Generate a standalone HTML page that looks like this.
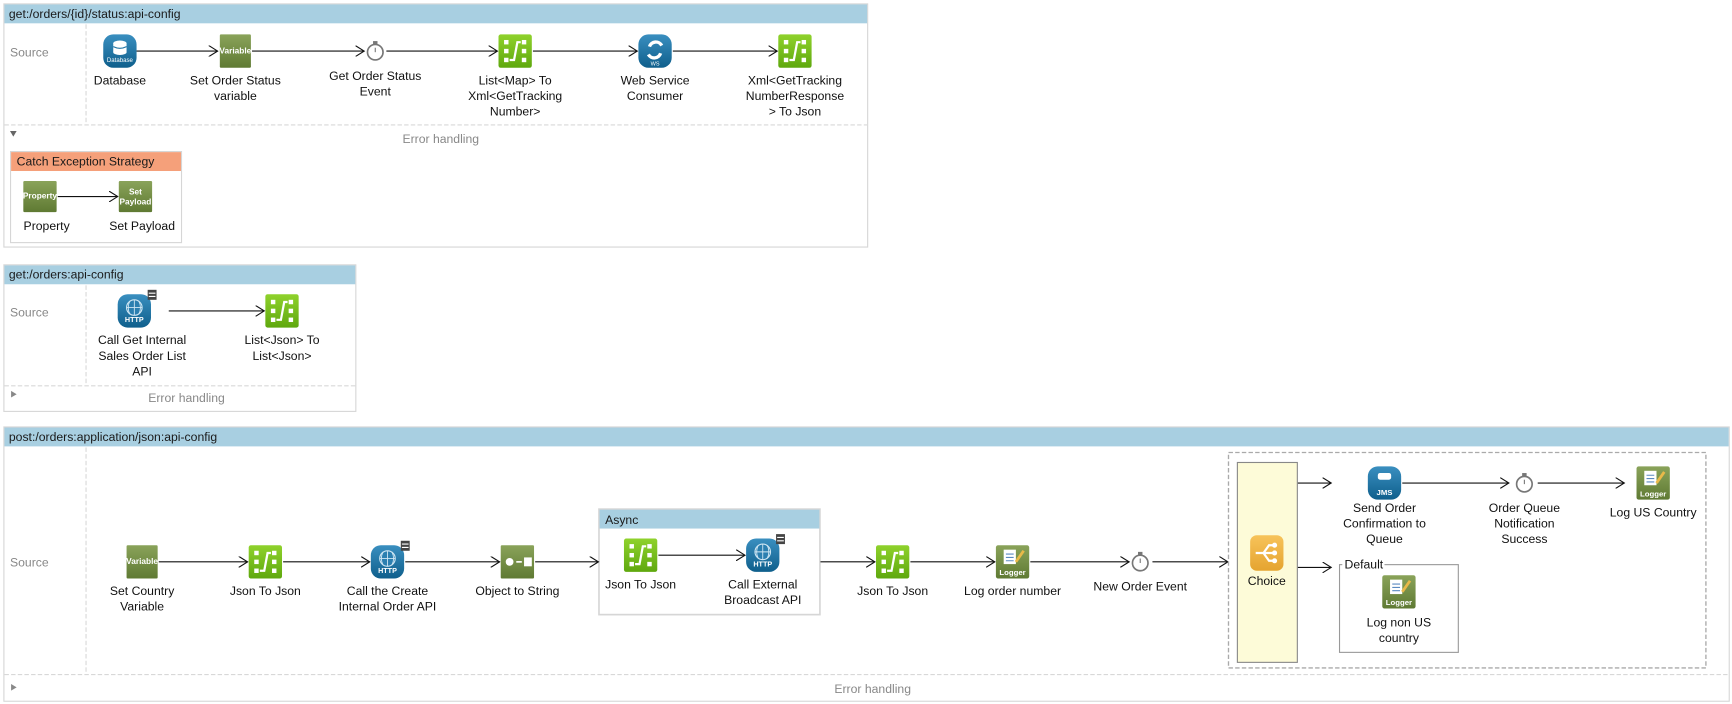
<!DOCTYPE html>
<html><head><meta charset="utf-8"><style>
html,body{margin:0;padding:0;background:#fff;overflow:hidden}
svg{display:block}
text{font-family:"Liberation Sans",sans-serif;font-size:11px;fill:#111}
.c{text-anchor:middle}
.g{fill:#888}
.h{fill:#1a1a1a}
</style></head><body>
<svg width="1732" height="704" viewBox="0 0 1560 634" preserveAspectRatio="none" xmlns="http://www.w3.org/2000/svg">
<defs>
<marker id="a" markerWidth="10" markerHeight="10" refX="8" refY="5" orient="auto" markerUnits="userSpaceOnUse">
<path d="M0,0 L8,5 L0,10" fill="none" stroke="#111" stroke-width="1"/></marker>
<linearGradient id="gr" x1="0" y1="0" x2="0" y2="1"><stop offset="0" stop-color="#8fd22c"/><stop offset="1" stop-color="#5fa80e"/></linearGradient>
<linearGradient id="ol" x1="0" y1="0" x2="0" y2="1"><stop offset="0" stop-color="#8aa35a"/><stop offset="1" stop-color="#5f7a33"/></linearGradient>
<linearGradient id="bl" x1="0" y1="0" x2="0" y2="1"><stop offset="0" stop-color="#3a8fc0"/><stop offset="1" stop-color="#0f5f8c"/></linearGradient>
<linearGradient id="or" x1="0" y1="0" x2="0" y2="1"><stop offset="0" stop-color="#f7c35a"/><stop offset="1" stop-color="#e5a430"/></linearGradient>
<g id="tr"><rect x="-15" y="-15" width="30" height="30" rx="2" fill="url(#gr)"/>
<rect x="-10" y="-10" width="4" height="4" fill="#fff"/><rect x="-10" y="-2" width="4" height="4" fill="#fff"/><rect x="-10" y="6" width="4" height="4" fill="#fff"/>
<rect x="6" y="-10" width="4" height="4" fill="#fff"/><rect x="6" y="-2" width="4" height="4" fill="#fff"/><rect x="6" y="6" width="4" height="4" fill="#fff"/>
<path d="M-5,8 L-1,8 L2,-8 L5,-8" fill="none" stroke="#fff" stroke-width="2"/></g>
<g id="tm"><circle cx="0" cy="1" r="7" fill="#fff" stroke="#777" stroke-width="1.5"/><rect x="-2" y="-9" width="4" height="3" fill="#777"/><path d="M0,1 L0,-3" stroke="#777"/></g>
<g id="ht"><rect x="-15" y="-15" width="30" height="30" rx="9" fill="url(#bl)"/><circle cx="0" cy="-3" r="7" fill="#2b7fb0" stroke="#cfe6f3" stroke-width="1"/><path d="M-7,-3 H7 M0,-10 V4 M-4,-9 Q-7,-3 -4,3 M4,-9 Q7,-3 4,3" stroke="#cfe6f3" fill="none" stroke-width="0.8"/><rect x="12" y="-19" width="8" height="9" fill="#444"/><path d="M13,-16 H19 M13,-13 H19" stroke="#fff" stroke-width="1"/></g>
<g id="lg"><rect x="-15" y="-15" width="30" height="30" rx="2" fill="url(#ol)"/><rect x="-8" y="-11" width="11" height="13" fill="#fff"/><path d="M-6,-7 H1 M-6,-4 H1 M-6,-1 H1" stroke="#5b8ac0"/><path d="M3,0 L10,-10" stroke="#e9b949" stroke-width="2.5"/></g>
</defs>

<!-- ===== Box 1 ===== -->
<rect x="3.5" y="3.5" width="778" height="219" fill="#fff" stroke="#d6d6d6"/>
<rect x="4" y="4" width="777" height="17" fill="#a8cfe1"/>
<text x="8" y="16" class="h">get:/orders/{id}/status:api-config</text>
<text x="9" y="51" class="g">Source</text>
<line x1="77.5" y1="22" x2="77.5" y2="110" stroke="#d8d8d8" stroke-dasharray="4,2"/>
<line x1="4" y1="112.5" x2="781" y2="112.5" stroke="#d8d8d8" stroke-dasharray="4,2"/>
<path d="M9,118 L15,118 L12,123Z" fill="#666"/>
<text x="397" y="129" class="c g">Error handling</text>
<g transform="translate(108,46)"><rect x="-15" y="-15" width="30" height="30" rx="9" fill="url(#bl)"/><ellipse cx="0" cy="-7" rx="6" ry="2.5" fill="#fff"/><rect x="-6" y="-7" width="12" height="8" fill="#fff"/><ellipse cx="0" cy="1" rx="6" ry="2.5" fill="#fff"/><path d="M-6,-4 Q0,-1 6,-4" stroke="#1f72a2" fill="none"/></g>
<text x="108" y="56" class="c" style="font-size:5.5px;fill:#fff">Database</text>
<g transform="translate(212,46)"><rect x="-14" y="-15" width="28" height="30" rx="1" fill="url(#ol)"/></g>
<text x="212" y="48" class="c" style="font-size:7.5px;fill:#fff;font-weight:bold">Variable</text>
<use href="#tm" x="338" y="46"/>
<use href="#tr" x="464" y="46"/>
<g transform="translate(590,46)"><rect x="-15" y="-15" width="30" height="30" rx="9" fill="url(#bl)"/><path d="M-5,-4 A6,6 0 0 1 6,-5 M5,2 A6,6 0 0 1 -6,3" stroke="#fff" stroke-width="3" fill="none"/></g>
<text x="590" y="59" class="c" style="font-size:5px;fill:#fff">WS</text>
<use href="#tr" x="716" y="46"/>
<g stroke="#111" stroke-width="1" marker-end="url(#a)">
<line x1="123" y1="46" x2="196" y2="46"/><line x1="227" y1="46" x2="328" y2="46"/><line x1="348" y1="46" x2="448" y2="46"/><line x1="480" y1="46" x2="574" y2="46"/><line x1="606" y1="46" x2="700" y2="46"/>
</g>
<text x="108" y="76" class="c">Database</text>
<text x="212" y="76" class="c">Set Order Status</text><text x="212" y="90" class="c">variable</text>
<text x="338" y="72" class="c">Get Order Status</text><text x="338" y="86" class="c">Event</text>
<text x="464" y="76" class="c">List&lt;Map&gt; To</text><text x="464" y="90" class="c">Xml&lt;GetTracking</text><text x="464" y="104" class="c">Number&gt;</text>
<text x="590" y="76" class="c">Web Service</text><text x="590" y="90" class="c">Consumer</text>
<text x="716" y="76" class="c">Xml&lt;GetTracking</text><text x="716" y="90" class="c">NumberResponse</text><text x="716" y="104" class="c">&gt; To Json</text>
<rect x="9.5" y="136.5" width="154" height="82" fill="#fff" stroke="#d6d6d6"/>
<rect x="10" y="137" width="153" height="17" fill="#f5a07a"/>
<text x="15" y="149" class="h">Catch Exception Strategy</text>
<rect x="21" y="163" width="30" height="28" rx="1" fill="url(#ol)"/>
<text x="36" y="179" class="c" style="font-size:7.5px;fill:#fff;font-weight:bold">Property</text>
<rect x="107" y="163" width="30" height="28" rx="1" fill="url(#ol)"/>
<text x="122" y="175" class="c" style="font-size:7.5px;fill:#fff;font-weight:bold">Set</text>
<text x="122" y="184" class="c" style="font-size:7.5px;fill:#fff;font-weight:bold">Payload</text>
<line x1="52" y1="177" x2="106" y2="177" stroke="#111" marker-end="url(#a)"/>
<text x="42" y="207" class="c">Property</text>
<text x="128" y="207" class="c">Set Payload</text>

<!-- ===== Box 2 ===== -->
<rect x="3.5" y="238.5" width="317" height="132" fill="#fff" stroke="#d6d6d6"/>
<rect x="4" y="239" width="316" height="17" fill="#a8cfe1"/>
<text x="8" y="251" class="h">get:/orders:api-config</text>
<text x="9" y="285" class="g">Source</text>
<line x1="77.5" y1="257" x2="77.5" y2="346" stroke="#d8d8d8" stroke-dasharray="4,2"/>
<line x1="4" y1="347.5" x2="320" y2="347.5" stroke="#d8d8d8" stroke-dasharray="4,2"/>
<path d="M10,352 L15,355 L10,358Z" fill="#888"/>
<text x="168" y="362" class="c g">Error handling</text>
<use href="#ht" x="121" y="280"/>
<text x="121" y="290" class="c" style="font-size:6.5px;fill:#fff;font-weight:bold">HTTP</text>
<use href="#tr" x="254" y="280"/>
<line x1="152" y1="280" x2="238" y2="280" stroke="#111" marker-end="url(#a)"/>
<text x="128" y="310" class="c">Call Get Internal</text><text x="128" y="324" class="c">Sales Order List</text><text x="128" y="338" class="c">API</text>
<text x="254" y="310" class="c">List&lt;Json&gt; To</text><text x="254" y="324" class="c">List&lt;Json&gt;</text>

<!-- ===== Box 3 ===== -->
<rect x="3.5" y="384.5" width="1554" height="247" fill="#fff" stroke="#d6d6d6"/>
<rect x="4" y="385" width="1553" height="17" fill="#a8cfe1"/>
<text x="8" y="397" class="h">post:/orders:application/json:api-config</text>
<text x="9" y="510" class="g">Source</text>
<line x1="77.5" y1="403" x2="77.5" y2="606" stroke="#d8d8d8" stroke-dasharray="4,2"/>
<line x1="4" y1="607.5" x2="1557" y2="607.5" stroke="#d8d8d8" stroke-dasharray="4,2"/>
<path d="M10,616 L15,619 L10,622Z" fill="#888"/>
<text x="786" y="624" class="c g">Error handling</text>

<rect x="114" y="491" width="28" height="30" rx="1" fill="url(#ol)"/>
<text x="128" y="508" class="c" style="font-size:7.5px;fill:#fff;font-weight:bold">Variable</text>
<use href="#tr" x="239" y="506"/>
<use href="#ht" x="349" y="506"/>
<text x="349" y="516" class="c" style="font-size:6.5px;fill:#fff;font-weight:bold">HTTP</text>
<rect x="451" y="491" width="30" height="30" rx="1" fill="url(#ol)"/>
<circle cx="459" cy="506" r="3.5" fill="#fff"/><path d="M465,506 H470" stroke="#fff" stroke-width="1.5"/><rect x="472" y="502" width="7" height="8" fill="#fff"/>

<rect x="539.5" y="458.5" width="199" height="95" fill="#fff" stroke="#d6d6d6" stroke-width="1.5"/>
<rect x="540" y="459" width="198" height="17" fill="#a8cfe1"/>
<text x="545" y="472" class="h">Async</text>
<use href="#tr" x="577" y="500"/>
<use href="#ht" x="687" y="500"/>
<text x="687" y="510" class="c" style="font-size:6.5px;fill:#fff;font-weight:bold">HTTP</text>
<line x1="593" y1="500" x2="671" y2="500" stroke="#111" marker-end="url(#a)"/>

<use href="#tr" x="804" y="506"/>
<use href="#lg" x="912" y="506"/>
<text x="912" y="518" class="c" style="font-size:7px;fill:#fff;font-weight:bold">Logger</text>
<use href="#tm" x="1027" y="506"/>

<g stroke="#111" stroke-width="1" marker-end="url(#a)">
<line x1="143" y1="506" x2="223" y2="506"/><line x1="255" y1="506" x2="333" y2="506"/><line x1="365" y1="506" x2="450" y2="506"/><line x1="482" y1="506" x2="539" y2="506"/>
<line x1="739" y1="506" x2="788" y2="506"/><line x1="820" y1="506" x2="896" y2="506"/><line x1="928" y1="506" x2="1017" y2="506"/><line x1="1038" y1="506" x2="1106" y2="506"/>
</g>
<text x="128" y="536" class="c">Set Country</text><text x="128" y="550" class="c">Variable</text>
<text x="239" y="536" class="c">Json To Json</text>
<text x="349" y="536" class="c">Call the Create</text><text x="349" y="550" class="c">Internal Order API</text>
<text x="466" y="536" class="c">Object to String</text>
<text x="577" y="530" class="c">Json To Json</text>
<text x="687" y="530" class="c">Call External</text><text x="687" y="544" class="c">Broadcast API</text>
<text x="804" y="536" class="c">Json To Json</text>
<text x="912" y="536" class="c">Log order number</text>
<text x="1027" y="532" class="c">New Order Event</text>

<!-- choice scope -->
<rect x="1106.5" y="407.5" width="430" height="194" fill="none" stroke="#aaa" stroke-width="1.2" stroke-dasharray="4,2"/>
<rect x="1114.5" y="416.5" width="54" height="180" fill="#fdfbd8" stroke="#888"/>
<rect x="1126" y="482" width="30" height="32" rx="6" fill="url(#or)"/>
<path d="M1131,498 L1138,498 L1143,491 L1148,491 M1138,498 L1148,498 M1138,498 L1143,505 L1148,505" stroke="#fff" stroke-width="2" fill="none"/>
<circle cx="1148" cy="491" r="2.3" fill="#fff"/><circle cx="1148" cy="498" r="2.3" fill="#fff"/><circle cx="1148" cy="505" r="2.3" fill="#fff"/>
<text x="1141" y="527" class="c">Choice</text>
<g stroke="#111" stroke-width="1" marker-end="url(#a)">
<line x1="1169" y1="435" x2="1199" y2="435"/><line x1="1169" y1="511" x2="1199" y2="511"/>
<line x1="1263" y1="435" x2="1359" y2="435"/><line x1="1385" y1="435" x2="1463" y2="435"/>
</g>
<g transform="translate(1247,435)"><rect x="-15" y="-15" width="30" height="30" rx="9" fill="url(#bl)"/><rect x="-6" y="-9" width="12" height="6" rx="2" fill="#fff"/></g>
<text x="1247" y="446" class="c" style="font-size:7px;fill:#fff;font-weight:bold">JMS</text>
<use href="#tm" x="1373" y="435"/>
<use href="#lg" x="1489" y="435"/>
<text x="1489" y="447" class="c" style="font-size:7px;fill:#fff;font-weight:bold">Logger</text>
<text x="1247" y="461" class="c">Send Order</text><text x="1247" y="475" class="c">Confirmation to</text><text x="1247" y="489" class="c">Queue</text>
<text x="1373" y="461" class="c">Order Queue</text><text x="1373" y="475" class="c">Notification</text><text x="1373" y="489" class="c">Success</text>
<text x="1489" y="465" class="c">Log US Country</text>
<rect x="1206.5" y="508.5" width="107" height="79" fill="#fff" stroke="#999"/>
<rect x="1209" y="503" width="38" height="10" fill="#fff"/>
<text x="1211" y="512">Default</text>
<use href="#lg" x="1260" y="533"/>
<text x="1260" y="545" class="c" style="font-size:7px;fill:#fff;font-weight:bold">Logger</text>
<text x="1260" y="564" class="c">Log non US</text><text x="1260" y="578" class="c">country</text>
</svg>
</body></html>
